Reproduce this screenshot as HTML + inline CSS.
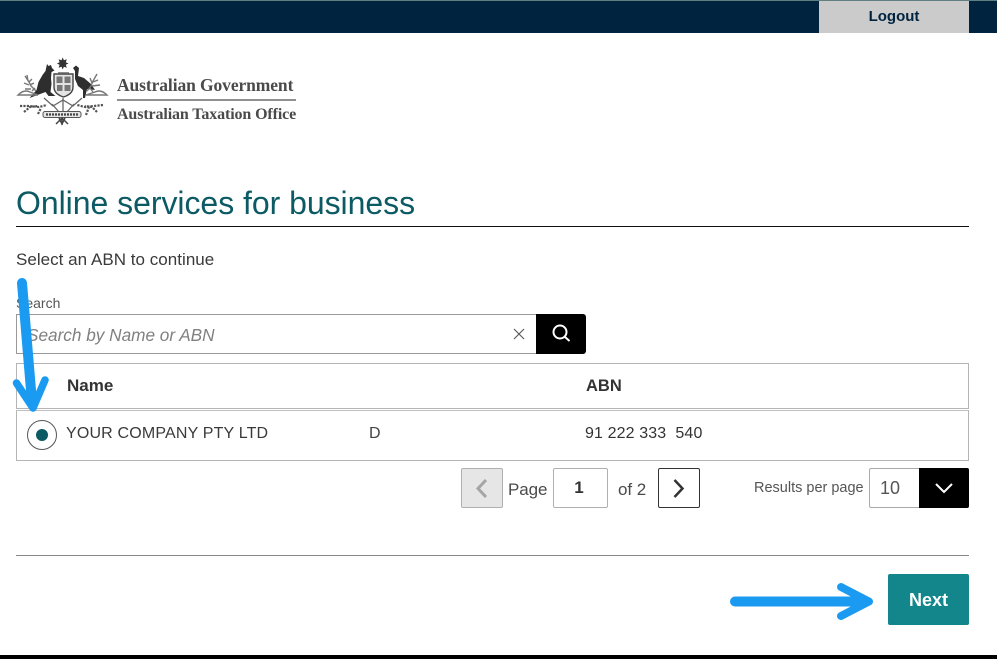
<!DOCTYPE html>
<html lang="en">
<head>
<meta charset="utf-8">
<title>Online services for business</title>
<style>
html,body{margin:0;padding:0;background:#fff}
body{position:relative;width:997px;height:659px;overflow:hidden;font-family:"Liberation Sans",sans-serif;color:#333}
.a{position:absolute;white-space:nowrap;box-sizing:border-box}
</style>
</head>
<body>
<div class="a" style="left:0;top:0;width:997px;height:33px;background:#00233f;border-top:1px solid #5f7f80"></div>
<div class="a" style="left:819px;top:1px;width:150px;height:32px;background:#cbcbcb;color:#00233f;font-weight:bold;font-size:15px;line-height:32px;text-align:center">Logout</div>

<svg class="a" style="left:10px;top:52px;filter:blur(.35px)" width="105" height="76" viewBox="0 0 105 76">
  <path d="M52.700 5.500l1.200 2.800 2.900-1-1 2.900 2.700 1.300-2.700 1.300 1 2.900-2.900-1-1.200 2.800-1.200-2.800-2.900 1 1-2.900-2.700-1.300 2.700-1.300-1-2.900 2.900 1z" fill="#333"/>
  <path d="M37 12l1.500 2 2.500-1 1 3 2.500 2.500-3 1.500-.5 6 .5 6-1 8 5 4-7 0-3-4-8 3-8 3 7-8 2-8 4-7 3-4z" fill="#2e2e2e"/>
  <path d="M63 16l3-2.500 3 2.500-1 8 6 2 7 6 4 6-8-1-2 9h-2l0-8-5-4-3-7 0-8z" fill="#2e2e2e"/>
  <path d="M44 22h19v13q0 7-9.500 10q-9.500-3-9.500-10z" fill="#e4e4e4" stroke="#444" stroke-width="1.400"/>
  <path d="M46.500 24.500h6v6.500h-6zM54.500 24.500h6v6.500h-6zM47 33h5.500v6h-5.500zM54.500 33h6v6h-6z" fill="#777"/>
  <path d="M48 21h11" stroke="#666" stroke-width="1.500"/>
  <g fill="none" stroke="#777" stroke-width="1.400">
    <path d="M15 24l4 6 2 4 5 5M17 23l1 6M22 27l-3 3M14 31l5 2M24 31l-4 2M15 37l6 0M25 36l-3 3"/>
    <path d="M87 22l-4 7-2 5-4 5M88 28l-5 2M80 26l2 5M90 33l-8 1M80 36l3 4"/>
    <path d="M8 43q6-6 12-3l8 3H8zM97 43q-6-6-12-3l-9 3h21z"/>
  </g>
  <g fill="none" stroke="#555" stroke-width="2.200" stroke-dasharray="2.200 1.200">
    <path d="M10 54l9 0 10 1 8-2M14 60l6-5 7-1"/>
    <path d="M93 53l-9 1-9 1-8-2M87 60l-5-5-7-1M76 63l3-8"/>
    <path d="M28 62l3-6"/>
  </g>
  <g fill="none" stroke="#666" stroke-width="1.300">
    <path d="M34 46l9 8 10-6 10 6 9-8M53 46v14M42 52l7 8M64 52l-7 8"/>
  </g>
  <rect x="33" y="59.500" width="38" height="6" rx="2" fill="#e6e6e6" stroke="#555" stroke-width="1"/>
  <path d="M36 62.500h32" stroke="#444" stroke-width="2.200" stroke-dasharray="2 1"/>
  <path d="M46 72l6-6 6 6M49 66l3 6 3-6M52 66v7" fill="none" stroke="#444" stroke-width="1.500"/>
</svg>
<div class="a" style="left:117px;top:75px;font-family:'Liberation Serif',serif;font-weight:bold;font-size:17.500px;line-height:20px;color:#4a4a4a;letter-spacing:-.1px">Australian Government</div>
<div class="a" style="left:117px;top:99px;width:179px;height:1.500px;background:#909090"></div>
<div class="a" style="left:117px;top:105px;font-family:'Liberation Serif',serif;font-weight:bold;font-size:16px;line-height:20px;color:#4a4a4a;letter-spacing:-.12px">Australian Taxation Office</div>

<div class="a" style="left:16px;top:184px;font-size:32px;line-height:38px;color:#0c5a63;letter-spacing:-.04px">Online services for business</div>
<div class="a" style="left:16px;top:226px;width:953px;height:1px;background:#111"></div>

<div class="a" style="left:16px;top:250px;font-size:17px;line-height:19px;color:#3a3a3a;letter-spacing:.03px">Select an ABN to continue</div>
<div class="a" style="left:16px;top:295px;font-size:14px;line-height:16px;color:#555">Search</div>
<div class="a" style="left:16px;top:314px;width:521px;height:40px;border:1px solid #999;border-right:0"></div>
<div class="a" style="left:27px;top:325px;font-size:17.200px;line-height:21px;font-style:italic;color:#808080">Search by Name or ABN</div>
<svg class="a" style="left:512px;top:327px" width="14" height="14" viewBox="0 0 14 14"><path d="M2 2l10 10M12 2L2 12" stroke="#555" stroke-width="1.100"/></svg>
<div class="a" style="left:536px;top:314px;width:50px;height:40px;background:#000;border-radius:0 3px 3px 0"></div>
<svg class="a" style="left:550px;top:322px" width="22" height="22" viewBox="0 0 22 22"><circle cx="10" cy="10" r="6.500" fill="none" stroke="#fff" stroke-width="2"/><path d="M15 15l4.500 4" stroke="#fff" stroke-width="2"/></svg>

<div class="a" style="left:16px;top:363px;width:953px;height:46px;border:1px solid #b5b5b5"></div>
<div class="a" style="left:16px;top:410px;width:953px;height:51px;border:1px solid #b5b5b5;border-top:1px solid #c0c0c0"></div>
<div class="a" style="left:67px;top:377px;font-size:17px;line-height:18px;font-weight:bold;color:#333">Name</div>
<div class="a" style="left:586px;top:377px;font-size:16.500px;line-height:18px;font-weight:bold;color:#333">ABN</div>
<div class="a" style="left:27px;top:420px;width:30px;height:30px;border:1px solid #555;border-radius:50%;background:#fff"></div>
<div class="a" style="left:36px;top:429px;width:12px;height:12px;border-radius:50%;background:#0c5a63"></div>
<div class="a" style="left:66px;top:425px;font-size:16px;line-height:18px;color:#3a3a3a;letter-spacing:.17px">YOUR COMPANY PTY LTD</div>
<div class="a" style="left:369px;top:425px;font-size:16px;line-height:18px;color:#444">D</div>
<div class="a" style="left:585px;top:425px;font-size:16px;line-height:18px;color:#333;white-space:pre;letter-spacing:.12px">91 222 333  540</div>

<div class="a" style="left:461px;top:468px;width:42px;height:40px;background:#e6e6e6;border:1px solid #b0b0b0;border-radius:2px"></div>
<svg class="a" style="left:461px;top:468px" width="42" height="40" viewBox="0 0 42 40"><path d="M25 12l-8 8.500 8 8.500" fill="none" stroke="#a5a5a5" stroke-width="3"/></svg>
<div class="a" style="left:508px;top:480px;font-size:17px;line-height:20px;color:#4a4a4a;letter-spacing:-.1px">Page</div>
<div class="a" style="left:553px;top:468px;width:55px;height:40px;border:1px solid #b0b0b0;border-radius:2px;text-align:center;font-size:17px;font-weight:bold;line-height:38px;color:#333;padding-right:3px">1</div>
<div class="a" style="left:618px;top:480px;font-size:17px;line-height:20px;color:#4a4a4a;letter-spacing:-.05px">of 2</div>
<div class="a" style="left:658px;top:468px;width:42px;height:40px;border:1px solid #333;border-radius:2px"></div>
<svg class="a" style="left:658px;top:468px" width="42" height="40" viewBox="0 0 42 40"><path d="M16.500 12l8 8.500-8 8.500" fill="none" stroke="#333" stroke-width="2.500"/></svg>
<div class="a" style="left:754px;top:480px;font-size:14.500px;line-height:16px;color:#555">Results per page</div>
<div class="a" style="left:869px;top:468px;width:60px;height:40px;border:1px solid #aaa;border-radius:2px 0 0 2px;font-size:18px;line-height:38px;padding-left:10px;color:#555">10</div>
<div class="a" style="left:919px;top:468px;width:50px;height:40px;background:#000;border-radius:0 2px 2px 0"></div>
<svg class="a" style="left:934px;top:481px" width="20" height="14" viewBox="0 0 20 14"><path d="M2 3l8 8 8-8" fill="none" stroke="#fff" stroke-width="2"/></svg>

<div class="a" style="left:16px;top:555px;width:953px;height:1px;background:#888"></div>
<div class="a" style="left:888px;top:574px;width:81px;height:51px;background:#12868a;border-radius:2px;color:#fff;font-weight:bold;font-size:18px;line-height:52px;text-align:center">Next</div>
<div class="a" style="left:0;top:655px;width:997px;height:4px;background:#000"></div>

<svg class="a" style="left:0;top:0;pointer-events:none" width="997" height="659" viewBox="0 0 997 659">
  <g fill="none" stroke="#1a9bf1" stroke-linecap="round" stroke-linejoin="round">
    <path d="M22 283L32 402" stroke-width="10"/>
    <path d="M16.500 383L33 408L45 380" stroke-width="7.500"/>
    <path d="M735 601.500H866" stroke-width="10"/>
    <path d="M841 587L869 601.500L841 616" stroke-width="8"/>
  </g>
</svg>
</body>
</html>
